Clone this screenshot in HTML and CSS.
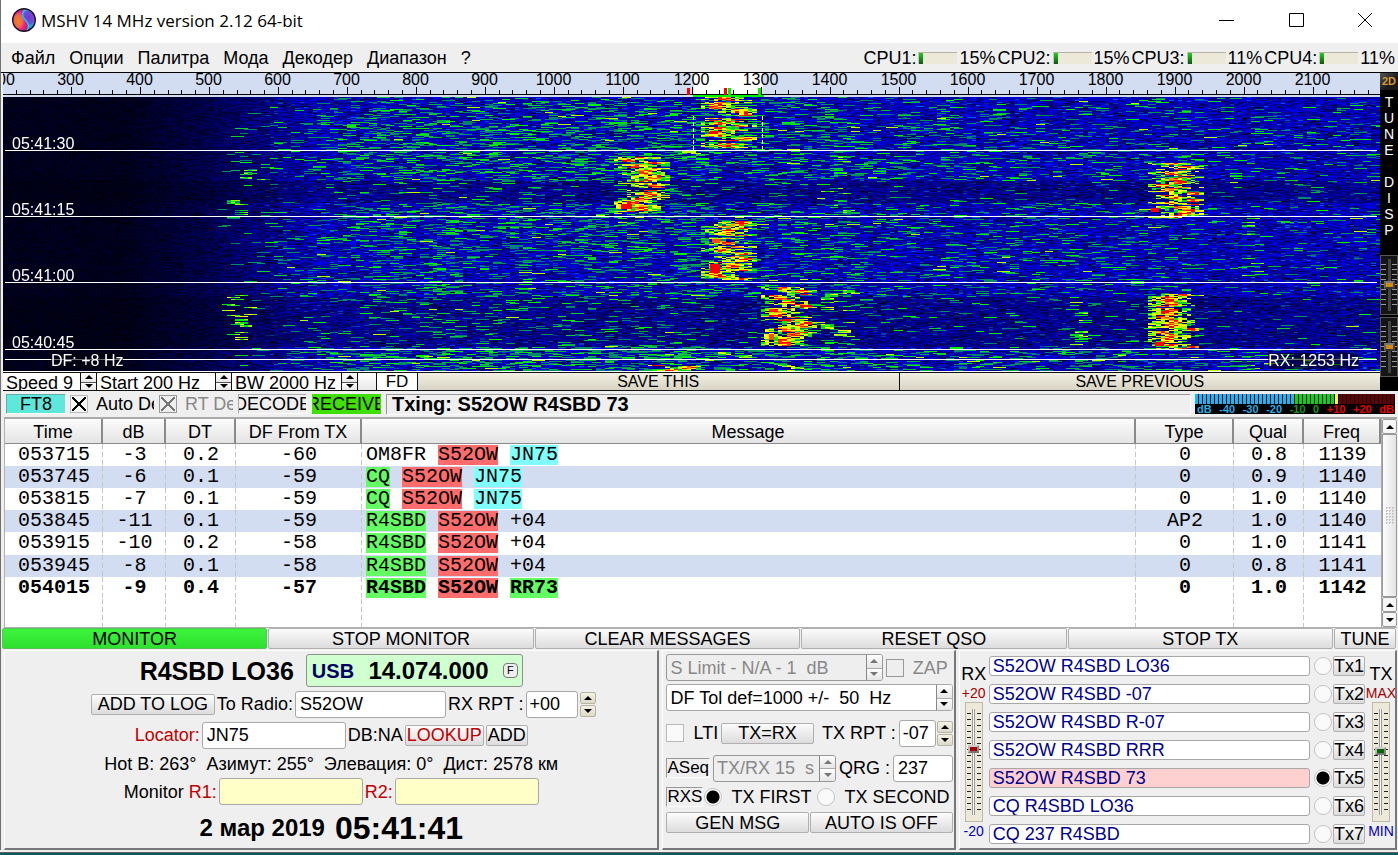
FILE: index.html
```html
<!DOCTYPE html>
<html lang="ru">
<head>
<meta charset="utf-8">
<title>MSHV 14 MHz version 2.12 64-bit</title>
<link rel="stylesheet" href="styles.css">
</head>
<body>
<div class="window">
  <header class="titlebar">
    <svg class="logo" viewBox="0 0 24 24" aria-hidden="true">
      <defs>
        <radialGradient id="warm" cx="35%" cy="55%" r="60%"><stop offset="0" stop-color="#e8822a"/><stop offset=".45" stop-color="#ee6a40"/><stop offset=".7" stop-color="#f01d9a"/><stop offset="1" stop-color="#d02050"/></radialGradient>
        <radialGradient id="cool" cx="70%" cy="38%" r="60%"><stop offset="0" stop-color="#7a35c9"/><stop offset=".45" stop-color="#6a4fd8"/><stop offset=".7" stop-color="#2aa8e8"/><stop offset="1" stop-color="#2030a0"/></radialGradient>
      </defs>
      <circle cx="12" cy="12" r="11" fill="url(#cool)"/>
      <path d="M13 1C6 .5 1 6 1 12c0 6 5 11 11 11 4-1 5-4 3.500-7.500C14 12 10.500 10.500 10 7.500 9.500 4.500 11 2.500 13 1z" fill="url(#warm)"/>
      <path d="M14 1.500C11 3 10 5.500 11 8.500c1 3 5 5 5.500 9 0 2-.5 3.500-1.500 4.500" fill="none" stroke="#19c8f0" stroke-width="1.500"/>
      <circle cx="12" cy="12" r="11.300" fill="none" stroke="#1a1028" stroke-width="1.400"/>
    </svg>
    <h1 class="title">MSHV 14 MHz version 2.12 64-bit</h1>
    <div class="caption">
      <button aria-label="Minimize"><svg viewBox="0 0 16 16"><path d="M0 8.500h15"/></svg></button>
      <button aria-label="Maximize"><svg viewBox="0 0 16 16"><path d="M.5 1.500h14v13h-14z"/></svg></button>
      <button aria-label="Close"><svg viewBox="0 0 16 16"><path d="M1 1l14 14M15 1L1 15"/></svg></button>
    </div>
  </header>

  <div class="menubar">
    <nav class="menu">
      <a href="#file">Файл</a><a href="#options">Опции</a><a href="#palette">Палитра</a><a href="#mode">Мода</a><a href="#decoder">Декодер</a><a href="#band">Диапазон</a><a href="#help">?</a>
    </nav>
    <div class="cpus">
      <span class="cpu">CPU1:<i class="load"></i><b>15%</b></span>
      <span class="cpu">CPU2:<i class="load"></i><b>15%</b></span>
      <span class="cpu">CPU3:<i class="load"></i><b>11%</b></span>
      <span class="cpu">CPU4:<i class="load"></i><b>11%</b></span>
    </div>
  </div>

  <section class="display">
    <div class="spectrum">
      <div class="ruler">
        <svg class="ticks" id="ticks" aria-hidden="true"></svg>
        <div class="scale">
          <span>200</span><span>300</span><span>400</span><span>500</span><span>600</span><span>700</span><span>800</span><span>900</span><span>1000</span><span>1100</span><span>1200</span><span>1300</span><span>1400</span><span>1500</span><span>1600</span><span>1700</span><span>1800</span><span>1900</span><span>2000</span><span>2100</span>
        </div>
      </div>
      <div class="fall">
        <canvas id="fall" width="1376" height="274"></canvas>
        <span class="stamp s1">05:41:30</span>
        <span class="stamp s2">05:41:15</span>
        <span class="stamp s3">05:41:00</span>
        <span class="stamp s4">05:40:45</span>
        <span class="note df">DF: +8 Hz</span>
        <span class="note rx">RX: 1253 Hz</span>
      </div>
      <div class="controls">
        <span class="mini speed"><input value="Speed 9" aria-label="Speed"><span class="step"><button aria-label="Up"></button><button aria-label="Down"></button></span></span>
        <span class="mini start"><input value="Start 200 Hz" aria-label="Start"><span class="step"><button aria-label="Up"></button><button aria-label="Down"></button></span></span>
        <span class="mini bw"><input value="BW 2000 Hz" aria-label="Bandwidth"><span class="step"><button aria-label="Up"></button><button aria-label="Down"></button></span></span>
        <span class="blank"></span>
        <button class="fd">FD</button>
        <button class="save">SAVE THIS</button>
        <button class="save">SAVE PREVIOUS</button>
      </div>
    </div>
    <aside class="side">
      <button class="twod">2D</button>
      <button class="tune-disp"><span>T</span><span>U</span><span>N</span><span>E</span><span></span><span>D</span><span>I</span><span>S</span><span>P</span></button>
      <input class="fader dark" type="range" value="50" aria-label="Gain">
      <input class="fader dark" type="range" value="50" aria-label="Contrast">
    </aside>
  </section>

  <section class="status">
    <button class="mode">FT8</button>
    <label class="tick auto"><input type="checkbox" checked><span>Auto Decode</span></label>
    <label class="tick rt"><input type="checkbox" checked disabled><span>RT Decode</span></label>
    <span class="flag">DECODE</span>
    <span class="flag on">RECEIVE</span>
    <strong class="txing">Txing: S52OW R4SBD 73</strong>
    <div class="meter">
      <div class="bars"></div>
      <div class="marks"><span>dB</span><span>-40</span><span>-30</span><span>-20</span><span class="g">-10</span><span class="g">0</span><span class="r">+10</span><span class="r">+20</span><span class="r">dB</span></div>
    </div>
  </section>

  <section class="decodes">
    <table>
      <colgroup><col class="c98"><col class="c63"><col class="c70"><col class="c126"><col><col class="c98"><col class="c70"><col class="c77"></colgroup>
      <thead><tr><th>Time</th><th>dB</th><th>DT</th><th>DF From TX</th><th>Message</th><th>Type</th><th>Qual</th><th>Freq</th></tr></thead>
      <tbody>
        <tr><td>053715</td><td>-3</td><td>0.2</td><td>-60</td><td>OM8FR <mark class="red">S52OW</mark> <mark class="cyan">JN75</mark></td><td>0</td><td>0.8</td><td>1139</td></tr>
        <tr><td>053745</td><td>-6</td><td>0.1</td><td>-59</td><td><mark>CQ</mark> <mark class="red">S52OW</mark> <mark class="cyan">JN75</mark></td><td>0</td><td>0.9</td><td>1140</td></tr>
        <tr><td>053815</td><td>-7</td><td>0.1</td><td>-59</td><td><mark>CQ</mark> <mark class="red">S52OW</mark> <mark class="cyan">JN75</mark></td><td>0</td><td>1.0</td><td>1140</td></tr>
        <tr><td>053845</td><td>-11</td><td>0.1</td><td>-59</td><td><mark>R4SBD</mark> <mark class="red">S52OW</mark> +04</td><td>AP2</td><td>1.0</td><td>1140</td></tr>
        <tr><td>053915</td><td>-10</td><td>0.2</td><td>-58</td><td><mark>R4SBD</mark> <mark class="red">S52OW</mark> +04</td><td>0</td><td>1.0</td><td>1141</td></tr>
        <tr><td>053945</td><td>-8</td><td>0.1</td><td>-58</td><td><mark>R4SBD</mark> <mark class="red">S52OW</mark> +04</td><td>0</td><td>0.8</td><td>1141</td></tr>
        <tr class="last"><td>054015</td><td>-9</td><td>0.4</td><td>-57</td><td><mark>R4SBD</mark> <mark class="red">S52OW</mark> <mark>RR73</mark></td><td>0</td><td>1.0</td><td>1142</td></tr>
        <tr class="rest"><td></td><td></td><td></td><td></td><td></td><td></td><td></td><td></td></tr>
      </tbody>
    </table>
    <div class="scroll">
      <button aria-label="Scroll up"></button>
      <div class="thumb"></div>
      <button aria-label="Page up"></button>
      <button class="down" aria-label="Scroll down"></button>
    </div>
  </section>

  <div class="actions">
    <button class="btn active">MONITOR</button><button class="btn">STOP MONITOR</button><button class="btn">CLEAR MESSAGES</button><button class="btn">RESET QSO</button><button class="btn">STOP TX</button><button class="btn">TUNE</button>
  </div>

  <main class="panels">
    <section class="panel log">
      <div class="row r-top">
        <strong class="call">R4SBD LO36</strong>
        <div class="freq"><span class="usb">USB</span><strong>14.074.000</strong><button>F</button></div>
      </div>
      <div class="row r-radio">
        <button class="btn add">ADD TO LOG</button>
        <label for="radio">To Radio:</label><input class="box w150" id="radio" value="S52OW">
        <label for="rxrpt">RX RPT :</label><input class="box w52" id="rxrpt" value="+00">
        <span class="step loose"><button aria-label="Up"></button><button aria-label="Down"></button></span>
      </div>
      <div class="row r-loc">
        <label class="redtext" for="loc">Locator:</label><input class="box w144" id="loc" value="JN75">
        <span>DB:NA</span><button class="btn redtext">LOOKUP</button><button class="btn">ADD</button>
      </div>
      <div class="row r-info"><span>Hot B: 263°&nbsp; Азимут: 255°&nbsp; Элевация: 0°&nbsp; Дист: 2578 км</span></div>
      <div class="row r-mon">
        <label for="m1">Monitor <span class="redtext">R1:</span></label><input class="box w144 yellow" id="m1">
        <label class="redtext" for="m2">R2:</label><input class="box w144 yellow" id="m2">
      </div>
      <div class="row r-clock"><strong class="date">2 мар 2019</strong><strong class="time">05:41:41</strong></div>
    </section>

    <section class="panel gen">
      <div class="row">
        <span class="spin grow off"><input value="S Limit - N/A - 1  dB" disabled aria-label="S Limit"><span class="step"><button disabled aria-label="Up"></button><button disabled aria-label="Down"></button></span></span>
        <label class="check zap"><input type="checkbox" disabled>ZAP</label>
      </div>
      <div class="row">
        <span class="spin grow"><input value="DF Tol def=1000 +/-  50  Hz" aria-label="DF tolerance"><span class="step"><button aria-label="Up"></button><button aria-label="Down"></button></span></span>
      </div>
      <div class="row r-lti">
        <label class="check"><input type="checkbox">LTI</label>
        <button class="btn grow">TX=RX</button>
        <label class="pad" for="txrpt">TX RPT :</label><input class="box w37" id="txrpt" value="-07">
        <span class="step loose"><button aria-label="Up"></button><button aria-label="Down"></button></span>
      </div>
      <div class="row r-seq">
        <span class="sunken">ASeq</span>
        <span class="spin period off"><input value="TX/RX 15  s" disabled aria-label="Period"><span class="step"><button disabled aria-label="Up"></button><button disabled aria-label="Down"></button></span></span>
        <label for="qrg">QRG :</label><input class="box grow" id="qrg" value="237">
      </div>
      <div class="row r-order">
        <span class="sunken">RXS</span>
        <label class="radio"><input type="radio" name="order" checked>TX FIRST</label>
        <label class="radio"><input type="radio" name="order">TX SECOND</label>
      </div>
      <div class="row r-gen"><button class="btn">GEN MSG</button><button class="btn">AUTO IS OFF</button></div>
    </section>

    <section class="panel tx">
      <div class="level"><label for="rxl">RX</label><small class="max">+20</small><input class="fader" id="rxl" type="range" value="62"><small class="min">-20</small></div>
      <div class="messages">
        <div class="msg"><input class="text" value="S52OW R4SBD LO36" aria-label="Message 1"><input type="radio" name="tx" aria-label="Tx1"><button class="btn">Tx1</button></div>
        <div class="msg"><input class="text" value="S52OW R4SBD -07" aria-label="Message 2"><input type="radio" name="tx" aria-label="Tx2"><button class="btn">Tx2</button></div>
        <div class="msg"><input class="text" value="S52OW R4SBD R-07" aria-label="Message 3"><input type="radio" name="tx" aria-label="Tx3"><button class="btn">Tx3</button></div>
        <div class="msg"><input class="text" value="S52OW R4SBD RRR" aria-label="Message 4"><input type="radio" name="tx" aria-label="Tx4"><button class="btn">Tx4</button></div>
        <div class="msg"><input class="text pink" value="S52OW R4SBD 73" aria-label="Message 5"><input type="radio" name="tx" checked aria-label="Tx5"><button class="btn">Tx5</button></div>
        <div class="msg"><input class="text" value="CQ R4SBD LO36" aria-label="Message 6"><input type="radio" name="tx" aria-label="Tx6"><button class="btn">Tx6</button></div>
        <div class="msg"><input class="text" value="CQ 237 R4SBD" aria-label="Message 7"><input type="radio" name="tx" aria-label="Tx7"><button class="btn">Tx7</button></div>
      </div>
      <div class="level txl"><label for="txl">TX</label><small class="max">MAX</small><input class="fader green" id="txl" type="range" value="60"><small class="min">MIN</small></div>
    </section>
  </main>
  <footer class="edge"></footer>
</div>
<script src="waterfall.js"></script>
</body>
</html>
```

FILE: styles.css
```css
* { box-sizing: border-box; }

body {
  margin: 0;
  font: 18px/20px "Liberation Sans", Arial, sans-serif;
  color: #000;
  background: #efefef;
}

button, input {
  font: inherit;
  color: inherit;
  margin: 0;
  padding: 0;
  border: 0;
  border-radius: 0;
  min-width: 0;
}

button { white-space: nowrap; }

.window {
  min-height: 100vh;
  display: flex;
  flex-direction: column;
  border-left: 1px solid #707070;
}

/* title bar */
.titlebar {
  height: 43px;
  background: #fff;
  display: flex;
  align-items: center;
  padding: 0 0 4px 11px;
}
.logo { width: 24px; height: 24px; }
.title {
  margin: 3px 0 0 5px;
  flex: 1;
  font: 400 17px/24px "Open Sans", "Noto Sans", sans-serif;
}
.caption { display: flex; }
.caption button { width: 70px; height: 32px; background: none; display: grid; place-items: center; }
.caption svg { width: 16px; height: 16px; fill: none; stroke: #000; stroke-width: 1; }
.caption button:last-child { width: 66px; }

/* menu */
.menubar {
  height: 29px;
  display: flex;
  align-items: center;
  justify-content: space-between;
  padding: 1px 3px 0 10px;
}
.menu { display: flex; gap: 14px; }
.menu a { color: #000; text-decoration: none; }
.cpus { display: flex; gap: 2px; }
.cpu { display: flex; align-items: center; }
.cpu b { font-weight: 400; }
.load {
  width: 39px;
  height: 12px;
  margin: 0 2px;
  border-top: 1px solid #b5b3a5;
  border-left: 1px solid #c9c7ba;
  background: linear-gradient(#2c2, #151) left / 4px 100% no-repeat #ece9d8;
}

/* spectrum display */
.display { display: flex; border-top: 1px solid #000; padding-left: 2px; }
.spectrum { flex: 1; min-width: 0; }
.ruler { position: relative; height: 24px; background: #d3ddf1; overflow: hidden; }
.ticks { position: absolute; inset: 0; width: 100%; height: 24px; shape-rendering: crispEdges; }
.scale {
  position: relative;
  display: grid;
  grid-template-columns: repeat(20, 1fr);
  margin-left: -36px;
  width: calc(100% + 3px);
  font-size: 16px;
  line-height: 14px;
  text-align: center;
}
.fall { position: relative; height: 275px; background: #fff; }
.fall canvas { display: block; width: 100%; height: 274px; image-rendering: pixelated; }
.stamp, .note { position: absolute; color: #fff; font-size: 16px; line-height: 16px; }
.stamp { left: 9px; }
.s1 { top: 39px; }
.s2 { top: 105px; }
.s3 { top: 171px; }
.s4 { top: 238px; }
.note { bottom: 3px; background: #00000a90; }
.df { left: 48px; }
.rx { right: 21px; }

.controls {
  height: 19px;
  border: 1px solid #111;
  border-width: 1px 0;
  background: #111;
  display: flex;
  gap: 1px;
}
.mini { display: flex; background: #fff; overflow: hidden; }
.mini input { flex: 1; width: 0; height: 17px; padding: 3px 0 0 3px; background: #fff; line-height: 20px; }
.speed { width: 93px; }
.start { width: 134px; }
.bw { width: 125px; }
.blank { width: 18px; background: linear-gradient(#fff, #e8e8e8); }
.fd { width: 40px; background: #fff; font-size: 17px; line-height: 17px; }
.save { flex: 1; background: linear-gradient(#f2efe3, #d8d4c4); font-size: 16px; line-height: 16px; }

.step { width: 16px; display: grid; grid-template-rows: 1fr 1fr; border-left: 1px solid #888; }
.step button {
  display: grid;
  place-items: center;
  background: linear-gradient(#fdfdfd, #e6e6e6);
}
.step button + button { border-top: 1px solid #aaa; }
.step button::before, .scroll button::before {
  content: "";
  border: solid transparent;
  border-width: 0 4px 4px;
  border-bottom-color: #000;
}
.step button + button::before, .scroll .down::before {
  border-width: 4px 4px 0;
  border-top-color: #000;
}
.mini .step { border-color: #111; }
.mini .step button + button { border-color: #555; }
.step.loose { height: 25px; border: 0; gap: 1px; }
.step.loose button { border: 1px solid #b8b4a0; border-radius: 2px; background: linear-gradient(#f4f1e6, #dedac8); }

.side {
  width: 18px;
  display: flex;
  flex-direction: column;
  background: #000;
  color: #fff;
}
.twod { height: 17px; background: linear-gradient(135deg, #555, #1a1a1a 60%); color: #d79a2a; font: bold 11px/15px "Liberation Sans", sans-serif; }
.tune-disp { flex: 1; display: flex; flex-direction: column; padding-top: 4px; background: #000; font-size: 14px; line-height: 16px; }
.tune-disp span { height: 16px; }

/* faders */
.fader {
  appearance: none;
  writing-mode: vertical-lr;
  direction: rtl;
  width: 18px;
  height: 120px;
  border: 1px solid #bdb9a4;
  background:
    linear-gradient(#fff, #fff) center / 1px 106px no-repeat,
    linear-gradient(#999, #999) center / 3px 106px no-repeat,
    linear-gradient(#ece9d8, #ece9d8) center / 6px 100% no-repeat,
    linear-gradient(#ece9d8, #ece9d8) left / 1px 100% no-repeat,
    linear-gradient(#ece9d8, #ece9d8) right / 1px 100% no-repeat,
    repeating-linear-gradient(#222 0 1px, #ece9d8 1px 6px) 0 10px / 100% 98px no-repeat #ece9d8;
}
.fader::-webkit-slider-thumb {
  appearance: none;
  width: 11px;
  height: 8px;
  border: 2px solid #a8a8a8;
  border-color: #ccc #888 #777 #bbb;
  background: #a00;
}
.fader.green::-webkit-slider-thumb { background: #060; }
.fader.dark {
  height: 60px;
  margin: 0 0 2px;
  border: 1px solid #555;
  background:
    linear-gradient(#444, #444) center / 3px 52px no-repeat,
    linear-gradient(#151515, #151515) center / 6px 100% no-repeat,
    repeating-linear-gradient(#999 0 1px, #151515 1px 5px) 0 8px / 100% 43px no-repeat #151515;
}
.fader.dark:last-child { margin-bottom: 14px; }
.fader.dark::-webkit-slider-thumb { border-color: #777 #444 #333 #666; background: #d38b0a; }

/* status line */
.status { height: 26px; display: flex; align-items: center; padding: 0 3px 0 5px; }
.status .mode { width: 60px; height: 20px; background: #5ee8dc; border: 1px solid #6aa; border-right-color: #fff; border-bottom-color: #fff; line-height: 18px; margin-right: 4px; }
.tick { display: flex; align-items: center; gap: 8px; overflow: hidden; white-space: nowrap; }
.tick span { overflow: hidden; }
.auto { width: 84px; margin-right: 5px; }
.rt { width: 74px; color: #888; margin-right: 5px; }
.flag {
  width: 69px;
  height: 20px;
  margin-right: 5px;
  display: flex;
  justify-content: center;
  overflow: hidden;
  border: 1px solid #aaa;
  border-right-color: #fff;
  border-bottom-color: #fff;
  line-height: 19px;
}
.flag.on { background: #3fe000; border-color: #3fe000; }
.txing { flex: 1; height: 21px; border: 1px solid #999; border-right-color: #fff; border-bottom-color: #fff; font-size: 20px; line-height: 19px; padding-left: 5px; margin-right: 4px; }
.meter { width: 200px; height: 20px; background: #000; }
.bars {
  height: 10px;
  background:
    repeating-linear-gradient(90deg, transparent 0 3px, #000 3px 4px),
    linear-gradient(90deg, #10b8f8 0 100px, #00d818 100px 140px, #ff0 140px 143px, #640000 143px);
}
.marks { display: flex; justify-content: space-between; padding: 0 1px 0 2px; color: #29abe2; font: bold 11px/10px "Liberation Sans", sans-serif; }
.marks .g { color: #0a9a1a; }
.marks .r { color: #e00; }

input[type="checkbox"], input[type="radio"] {
  appearance: none;
  flex: none;
  width: 18px;
  height: 18px;
  border: 1px solid #bbb;
  background: #fafafa;
}
input[type="checkbox"]:checked {
  background:
    linear-gradient(45deg, transparent 43%, #000 43% 57%, transparent 57%) center / 14px 14px no-repeat,
    linear-gradient(-45deg, transparent 43%, #000 43% 57%, transparent 57%) center / 14px 14px no-repeat,
    #f4f4f4;
}
input[type="checkbox"]:disabled { background-color: #eee; border-color: #999; }
input[type="checkbox"]:checked:disabled {
  background:
    linear-gradient(45deg, transparent 43%, #777 43% 57%, transparent 57%) center / 14px 14px no-repeat,
    linear-gradient(-45deg, transparent 43%, #777 43% 57%, transparent 57%) center / 14px 14px no-repeat,
    #eee;
}
input[type="radio"] { border-radius: 50%; border-color: #c4c4c4; }
input[type="radio"]:checked { background: radial-gradient(circle, #000 6px, #fafafa 7px); }

/* decoded messages */
.decodes { flex: 1; display: flex; margin: 0 1px 0 3px; border: 1px solid #b0b0b0; border-top: 2px solid #aaa; border-right: 0; background: #fff; }
table { flex: 1; border-collapse: separate; border-spacing: 0; table-layout: fixed; width: 0; }
.c98 { width: 98px; }
.c63 { width: 63px; }
.c70 { width: 70px; }
.c126 { width: 126px; }
.c77 { width: 77px; }
th {
  height: 25px;
  padding: 2px 0 0;
  font-weight: 400;
  line-height: 20px;
  border-right: 2px solid #8a8a8a;
  border-bottom: 1px solid #8a8a8a;
  background: linear-gradient(#fcfcfc, #e4e4e4);
}
td {
  height: 22px;
  padding: 0;
  text-align: center;
  font: 20px/22px "Liberation Mono", "Courier New", monospace;
  background: repeating-linear-gradient(#c6c6c6 0 5px, transparent 5px 8px) right / 1px 100% no-repeat;
}
td:last-child { background: none; }
td:nth-child(5) { text-align: left; padding-left: 4px; }
tbody tr:nth-child(even):not(.rest) { background: #d3ddf1; }
.last td { font-weight: 700; }
.rest td { height: 28px; }
mark { display: inline-block; line-height: 20px; background: #63fc63; color: inherit; }
.red { background: #ff6c6c; }
.cyan { background: #80ffff; }

.scroll { width: 16px; display: flex; flex-direction: column; border-left: 1px solid #aaa; }
.scroll button { height: 15px; display: grid; place-items: center; border: 1px solid #999; border-radius: 2px; background: #f6f6f6; }
.thumb { flex: 1; display: grid; place-items: center; border: 1px solid #999; background: linear-gradient(90deg, #fcfcfc, #e4e4e4); }
.thumb::before { content: ""; width: 9px; height: 18px; background: conic-gradient(#c4c4c4 25%, transparent 0) 0 0 / 3px 3px; }

/* push buttons */
.btn {
  height: 21px;
  padding: 0 1px;
  border: 1px solid #b0b0b0;
  border-radius: 2px;
  background: linear-gradient(#fcfcfc, #dcdcdc);
  line-height: 18px;
}
.actions { display: grid; grid-template-columns: repeat(5, 1fr) 62px; gap: 1px; padding: 0 2px 1px 1px; }
.actions .active { background: linear-gradient(#3cf43c, #2fe02f); border-color: #58c058; }

/* lower panels */
.panels { display: grid; grid-template-columns: minmax(600px, 655fr) minmax(293px, 293fr) minmax(438px, 438fr); gap: 3px; padding: 0 1px 0 3px; }
.panel { height: 200px; border: 1px solid #fff; border-right: 2px solid #777; border-bottom: 2px solid #777; padding: 3px 2px 0; }
.row { display: flex; align-items: center; white-space: pre; }
.redtext { color: #c00000; }
.grow { flex: 1; }
.box, .spin, .text { border: 1px solid #a8a8a8; border-radius: 3px; background: #fff; }
.box { height: 27px; padding: 0 4px; }
.w150 { width: 151px; }
.w144 { width: 144px; }
.w52 { width: 52px; }
.w37 { width: 37px; }
.w37, .w52 { padding: 0 3px; }
.yellow { background: #ffffc8; }

.log { display: flex; flex-direction: column; gap: 3px; }
.log .row { justify-content: center; height: 28px; gap: 2px; }
.log .r-top { height: 33px; gap: 12px; }
.log .r-radio { padding-left: 24px; }
.log .r-info { height: 23px; }
.log .r-mon { height: 27px; }
.log .r-clock { height: 40px; gap: 10px; }
.call { font-size: 25px; }
.freq { width: 217px; height: 33px; display: flex; align-items: center; justify-content: space-between; padding: 0 4px 0 5px; border: 1px solid #8a948a; border-radius: 3px; background: #d0ffd0; font-size: 24px; }
.usb { color: #000060; font-weight: 700; font-size: 20px; }
.freq button { width: 15px; height: 15px; border: 1px solid #777; border-radius: 4px; background: #eee; font-size: 11px; line-height: 13px; }
.add { width: 124px; }
.date { font-size: 24px; }
.time { font-size: 32px; }

.gen { padding: 3px 1px 0 3px; }
.gen .row { height: 27px; gap: 3px; margin-bottom: 3px; }
.spin { height: 27px; display: flex; overflow: hidden; }
.spin input { flex: 1; width: 0; padding-left: 3px; background: none; }
.off { color: #888; background: #eee; border-color: #999; }
.off .step button::before { border-bottom-color: #777; }
.off .step button + button::before { border-bottom-color: transparent; border-top-color: #777; }
.check { display: flex; align-items: center; gap: 9px; }
.zap { color: #888; width: 67px; }
.gen .r-lti { height: 34px; margin-bottom: 6px; padding-top: 4px; }
.gen .r-lti .step { margin-left: -2px; }
.pad { padding-left: 5px; }
.period { width: 123px; }
.sunken { border: 1px solid #999; border-right-color: #fff; border-bottom-color: #fff; font-size: 17px; line-height: 18px; }
.gen .r-seq { height: 28px; margin-bottom: 0; }
.gen .r-order { height: 30px; margin-bottom: 0; gap: 1px; }
.radio { display: flex; align-items: center; gap: 9px; padding-right: 5px; }
.gen .r-gen { display: grid; grid-template-columns: 1fr 1fr; gap: 1px; height: 21px; }

.tx { display: grid; grid-template-columns: 26px 1fr 28px; gap: 2px; padding: 2px 0 0 1px; }
.level { display: flex; flex-direction: column; align-items: center; padding-top: 11px; }
.level small { font-size: 14px; line-height: 18px; }
.level .max { color: #a00000; }
.level .min { color: #0000c0; }
.messages { display: flex; flex-direction: column; gap: 8px; padding-top: 3px; }
.msg { display: flex; align-items: center; height: 20px; }
.text { flex: 1; height: 20px; padding: 0 3px; color: #00008b; line-height: 18px; }
.pink { background: #ffd0d0; }
.msg input[type="radio"] { margin: 0 1px 0 4px; }
.msg .btn { width: 32px; height: 20px; padding: 0; line-height: 17px; }

.edge { height: 5px; margin-left: -1px; background: linear-gradient(#efefef 0 2px, #606060 2px 3px, #0b5a60 3px); }
```

FILE: waterfall.js
```javascript
// Frequency scale: 100 Hz steps start at the left edge of the display.
(function () {
  var svg = document.getElementById('ticks');
  var ns = 'http://www.w3.org/2000/svg';
  var width = 1376;
  function pct(x) { return (x / width * 100) + '%'; }
  function rect(x, y, w, h, fill) {
    var r = document.createElementNS(ns, 'rect');
    r.setAttribute('x', pct(x));
    r.setAttribute('y', y);
    r.setAttribute('width', w);
    r.setAttribute('height', h);
    r.setAttribute('fill', fill);
    svg.appendChild(r);
  }
  rect(690, 0, 69, 22, '#fff');
  for (var i = 0; i < 100; i++) {
    var major = i % 5 === 0;
    rect(-1 + i * 13.785, major ? 14 : 17, 1, major ? 7 : 4, '#000');
  }
  rect(0, 21, width * 4, 1, '#000');
  rect(689, 22, 71, 2, '#00f000');
  rect(684, 15, 3, 7, '#f00');
  rect(720, 15, 3, 7, '#f00');
  rect(724, 15, 3, 7, '#00f000');
  rect(754, 15, 3, 7, '#00f000');
})();

// Waterfall: noise floor, passband slope and transmissions.
(function () {
  var canvas = document.getElementById('fall');
  var ctx = canvas.getContext('2d');
  var W = canvas.width, H = canvas.height, COLS = 320;
  var seed = 90125;
  function rnd() {
    seed = (seed * 1664525 + 1013904223) >>> 0;
    return seed / 4294967296;
  }
  function pick(list) { return list[Math.floor(rnd() * list.length)]; }
  function edge(c) { return Math.round(c * W / COLS); }

  function activity(y) {
    if (y < 25) return .6;
    if (y < 53) return .9;
    if (y < 84) return .8;
    if (y < 106) return .22;
    if (y < 150) return .75;
    if (y < 200) return .6;
    if (y < 250) return .28;
    return 1.15;
  }
  function band(x) {
    if (x < 200) return 0;
    if (x < 300) return (x - 200) / 100 * .3;
    if (x < 370) return .3 + (x - 300) / 70 * .7;
    if (x < 700) return 1;
    if (x < 850) return .75;
    if (x < 1180) return .5;
    return .26;
  }
  function floor(x) {
    if (x < 120) return 32;
    if (x < 200) return 32 + (x - 120) * .6;
    if (x < 310) return 80 + (x - 200) * 1.1;
    return 200;
  }

  var y, c, x, i;
  for (y = 0; y < H; y++) {
    var run = 0, color = null;
    var quiet = activity(y) < .3 ? .78 : 1;
    for (c = 0; c < COLS; c++) {
      x = c * W / COLS;
      if (run > 0) {
        run--;
      } else {
        color = null;
        var r = rnd();
        var p = band(x) * activity(y) * .125;
        if (r < p * .04) color = '#b8ff00';
        else if (r < p * .75) color = pick(['#00f000', '#10d030', '#00b840']);
        else if (r < p * 1.5) color = pick(['#008070', '#009060']);
        if (color) run = rnd() < .6 ? 1 : 2;
      }
      if (color) {
        ctx.fillStyle = color;
      } else {
        var b = floor(x) * quiet * (.5 + rnd() * .75);
        if (rnd() < .03) b *= .3;
        var g = x > 260 && rnd() < .06 ? b * .35 : 0;
        ctx.fillStyle = 'rgb(0,' + Math.round(g) + ',' + Math.min(255, Math.round(b)) + ')';
      }
      ctx.fillRect(edge(c), y, edge(c + 1) - edge(c), 1);
    }
  }

  // Each transmission hops between tones every few rows.
  // [left, top, right, bottom, strength]
  var signals = [
    [702, 0, 746, 51, 1], [617, 60, 659, 115, 1], [702, 124, 745, 183, 1],
    [760, 190, 802, 249, .8], [1147, 66, 1190, 121, 1], [1147, 197, 1190, 252, 1],
    [812, 58, 848, 118, .2], [812, 193, 848, 240, .4], [216, 194, 248, 243, .3],
    [232, 58, 266, 90, .2], [1057, 208, 1082, 248, .3], [645, 268, 690, 274, .8],
    [710, 255, 745, 261, .5], [220, 102, 245, 118, .2], [765, 268, 805, 274, .5],
    [1235, 255, 1250, 274, .15], [1235, 120, 1255, 180, .12]
  ];
  signals.forEach(function (s) {
    var first = Math.round(s[0] * COLS / W), last = Math.round(s[2] * COLS / W);
    var strong = s[4] > .6;
    var tone = first, hold = 0;
    for (y = s[1]; y < s[3]; y++) {
      if (hold-- <= 0) {
        tone = first + Math.floor(rnd() * (last - first - 2));
        hold = Math.floor(rnd() * 3);
      }
      if (rnd() > (strong ? .93 : s[4] * 1.5)) continue;
      for (i = -3; i < 7; i++) {
        c = tone + i;
        if (c < first - 1 || c > last + 1) continue;
        var core = i > 0 && i < 4;
        if (!core && rnd() < .35) continue;
        if (strong) {
          ctx.fillStyle = core
            ? pick(['#f00', '#f00', '#ff3000', '#ff9000', '#ff0', '#ff0'])
            : pick(['#ff0', '#d8f000', '#90ff00', '#00f000', '#00d030']);
        } else {
          if (!core) continue;
          ctx.fillStyle = pick(['#00f000', '#00d030', '#90ff00', s[4] > .25 ? '#ff0' : '#009060']);
        }
        ctx.fillRect(edge(c), y, edge(c + 1) - edge(c), 1);
      }
    }
  });

  var blobs = [
    [617, 107, 629, 112, '#f00'], [613, 107, 618, 112, '#ff0'],
    [706, 167, 716, 176, '#f00'], [706, 34, 714, 37, '#f00'],
    [765, 237, 770, 243, '#ff4800'], [760, 237, 765, 242, '#ff0'],
    [1147, 111, 1155, 115, '#f00'], [1151, 245, 1160, 249, '#f00'],
    [708, 142, 716, 146, '#ff4800']
  ];
  blobs.forEach(function (b) {
    ctx.fillStyle = b[4];
    ctx.fillRect(b[0], b[1], b[2] - b[0], b[3] - b[1]);
  });

  ctx.fillStyle = '#fff';
  [53, 119, 185, 252, 262].forEach(function (line) {
    ctx.fillRect(2, line, W - 5, 1);
  });
  for (y = 19; y < 52; y += 6) {
    ctx.fillRect(689, y, 1, 4);
    ctx.fillRect(758, y, 1, 4);
  }
})();
```
